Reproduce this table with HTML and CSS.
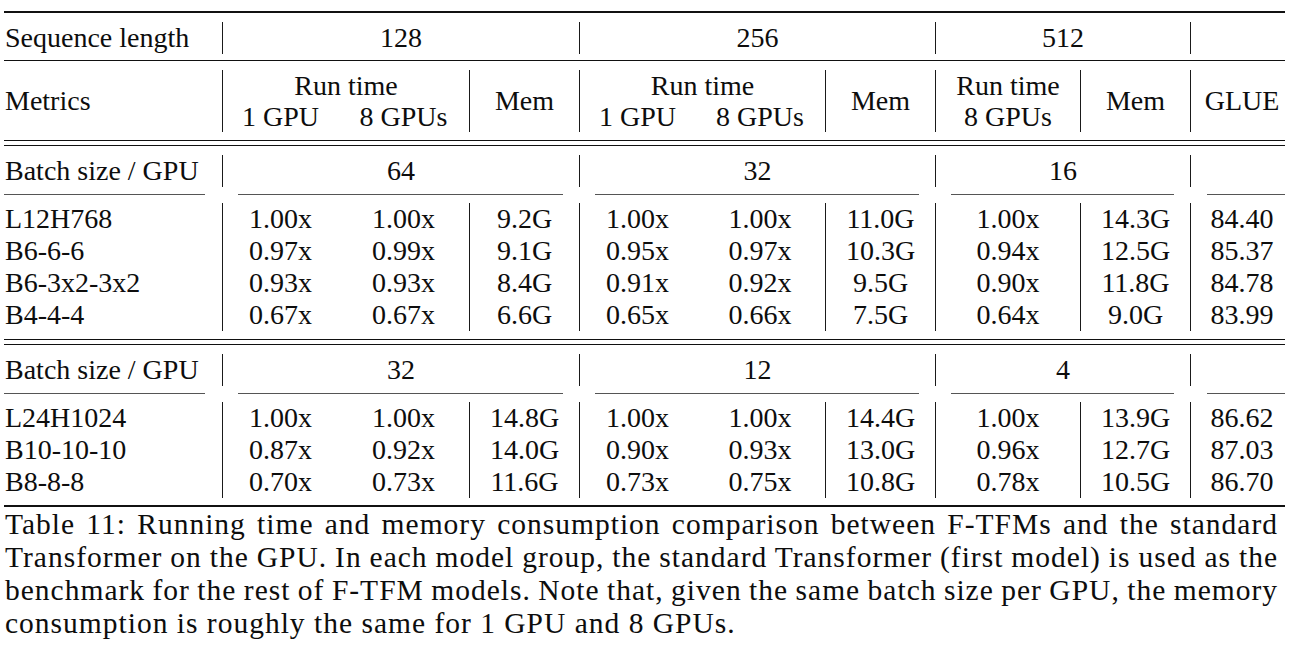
FILE: index.html
```html
<!DOCTYPE html>
<html lang="en">
<head>
<meta charset="utf-8">
<title>Table 11</title>
<link rel="stylesheet" href="styles.css">
</head>
<body>
<table class="results">
  <colgroup>
    <col class="c-label"><col class="c-g1"><col class="c-g8"><col class="c-mem">
    <col class="c-g1"><col class="c-g8b"><col class="c-mem">
    <col class="c-rt"><col class="c-mem"><col class="c-glue">
  </colgroup>
  <tbody>
    <tr class="rule thick"><td colspan="10"></td></tr>
    <tr class="gap g9"><td colspan="10"></td></tr>
    <tr class="row">
      <td class="label">Sequence length</td>
      <td class="bl" colspan="3">128</td>
      <td class="bl" colspan="3">256</td>
      <td class="bl" colspan="2">512</td>
      <td class="bl"></td>
    </tr>
    <tr class="gap g6"><td colspan="10"></td></tr>
    <tr class="rule thin"><td colspan="10"></td></tr>
    <tr class="gap g9"><td colspan="10"></td></tr>
    <tr class="row hdr">
      <td class="label" rowspan="2">Metrics</td>
      <td class="bl" colspan="2">Run time</td>
      <td class="bl" rowspan="2">Mem</td>
      <td class="bl" colspan="2">Run time</td>
      <td class="bl" rowspan="2">Mem</td>
      <td class="bl">Run time</td>
      <td class="bl" rowspan="2">Mem</td>
      <td class="bl glue" rowspan="2">GLUE</td>
    </tr>
    <tr class="row hdr">
      <td class="bl">1 GPU</td><td>8 GPUs</td>
      <td class="bl">1 GPU</td><td>8 GPUs</td>
      <td class="bl">8 GPUs</td>
    </tr>
    <tr class="gap g8"><td colspan="10"></td></tr>
    <tr class="rule double"><td colspan="10"></td></tr>
    <tr class="gap g9"><td colspan="10"></td></tr>
    <tr class="row">
      <td class="label">Batch size / GPU</td>
      <td class="bl" colspan="3">64</td>
      <td class="bl" colspan="3">32</td>
      <td class="bl" colspan="2">16</td>
      <td class="bl"></td>
    </tr>
    <tr class="gap g7"><td colspan="10"></td></tr>
    <tr class="cmid">
      <td><div class="cl r"></div></td>
      <td colspan="3"><div class="cl lr"></div></td>
      <td colspan="3"><div class="cl lr"></div></td>
      <td colspan="2"><div class="cl lr"></div></td>
      <td><div class="cl l"></div></td>
    </tr>
    <tr class="gap g8"><td colspan="10"></td></tr>
    <tr class="row"><td class="label">L12H768</td><td class="bl">1.00x</td><td>1.00x</td><td class="bl">9.2G</td><td class="bl">1.00x</td><td>1.00x</td><td class="bl">11.0G</td><td class="bl">1.00x</td><td class="bl">14.3G</td><td class="bl glue">84.40</td></tr>
    <tr class="row"><td class="label">B6-6-6</td><td class="bl">0.97x</td><td>0.99x</td><td class="bl">9.1G</td><td class="bl">0.95x</td><td>0.97x</td><td class="bl">10.3G</td><td class="bl">0.94x</td><td class="bl">12.5G</td><td class="bl glue">85.37</td></tr>
    <tr class="row"><td class="label">B6-3x2-3x2</td><td class="bl">0.93x</td><td>0.93x</td><td class="bl">8.4G</td><td class="bl">0.91x</td><td>0.92x</td><td class="bl">9.5G</td><td class="bl">0.90x</td><td class="bl">11.8G</td><td class="bl glue">84.78</td></tr>
    <tr class="row"><td class="label">B4-4-4</td><td class="bl">0.67x</td><td>0.67x</td><td class="bl">6.6G</td><td class="bl">0.65x</td><td>0.66x</td><td class="bl">7.5G</td><td class="bl">0.64x</td><td class="bl">9.0G</td><td class="bl glue">83.99</td></tr>
    <tr class="gap g8"><td colspan="10"></td></tr>
    <tr class="rule double"><td colspan="10"></td></tr>
    <tr class="gap g9"><td colspan="10"></td></tr>
    <tr class="row">
      <td class="label">Batch size / GPU</td>
      <td class="bl" colspan="3">32</td>
      <td class="bl" colspan="3">12</td>
      <td class="bl" colspan="2">4</td>
      <td class="bl"></td>
    </tr>
    <tr class="gap g7"><td colspan="10"></td></tr>
    <tr class="cmid">
      <td><div class="cl r"></div></td>
      <td colspan="3"><div class="cl lr"></div></td>
      <td colspan="3"><div class="cl lr"></div></td>
      <td colspan="2"><div class="cl lr"></div></td>
      <td><div class="cl l"></div></td>
    </tr>
    <tr class="gap g8"><td colspan="10"></td></tr>
    <tr class="row"><td class="label">L24H1024</td><td class="bl">1.00x</td><td>1.00x</td><td class="bl">14.8G</td><td class="bl">1.00x</td><td>1.00x</td><td class="bl">14.4G</td><td class="bl">1.00x</td><td class="bl">13.9G</td><td class="bl glue">86.62</td></tr>
    <tr class="row"><td class="label">B10-10-10</td><td class="bl">0.87x</td><td>0.92x</td><td class="bl">14.0G</td><td class="bl">0.90x</td><td>0.93x</td><td class="bl">13.0G</td><td class="bl">0.96x</td><td class="bl">12.7G</td><td class="bl glue">87.03</td></tr>
    <tr class="row"><td class="label">B8-8-8</td><td class="bl">0.70x</td><td>0.73x</td><td class="bl">11.6G</td><td class="bl">0.73x</td><td>0.75x</td><td class="bl">10.8G</td><td class="bl">0.78x</td><td class="bl">10.5G</td><td class="bl glue">86.70</td></tr>
    <tr class="gap g7"><td colspan="10"></td></tr>
    <tr class="rule thick"><td colspan="10"></td></tr>
  </tbody>
</table>
<div class="caption">
  <div class="cap-line">Table 11: Running time and memory consumption comparison between F-TFMs and the standard</div>
  <div class="cap-line tight">Transformer on the GPU. In each model group, the standard Transformer (first model) is used as the</div>
  <div class="cap-line tight">benchmark for the rest of F-TFM models. Note that, given the same batch size per GPU, the memory</div>
  <div class="cap-line last">consumption is roughly the same for 1 GPU and 8 GPUs.</div>
</div>
</body>
</html>
```

FILE: styles.css
```css
html, body {
  margin: 0;
  padding: 0;
  background: #ffffff;
}

body {
  font-family: "Liberation Serif", "Times New Roman", serif;
  font-size: 28px;
  color: #0d0d0d;
}

.results {
  margin: 11px 0 0 4px;
  width: 1281px;
  table-layout: fixed;
  border-collapse: separate;
  border-spacing: 0;
}

.c-label { width: 218px; }
.c-g1 { width: 116px; }
.c-g8 { width: 131px; }
.c-g8b { width: 130px; }
.c-mem { width: 110px; }
.c-rt { width: 145px; }
.c-glue { width: 95px; }

.results td {
  padding: 0;
  text-align: center;
  white-space: nowrap;
}

.row td {
  height: 32px;
  line-height: 32px;
}

.row.hdr td {
  height: 31px;
  line-height: 30px;
}

.row td.label {
  text-align: left;
  padding-left: 1px;
}

.row td.bl {
  border-left: 1px solid #1a1a1a;
}

.row td.glue {
  padding-left: 8px;
}

.gap td {
  padding: 0;
  font-size: 0;
  line-height: 0;
}

.g6 td { height: 6px; }
.g7 td { height: 7px; }
.g8 td { height: 8px; }
.g9 td { height: 9px; }

.rule td {
  height: 0;
  font-size: 0;
  line-height: 0;
}

.rule.thick td {
  border-top: 2px solid #111111;
}

.rule.thin td {
  border-top: 1px solid #111111;
}

.rule.double td {
  height: 4px;
  border-top: 1px solid #111111;
  border-bottom: 1px solid #111111;
}

.cmid td {
  height: 1px;
  font-size: 0;
  line-height: 0;
}

.cl {
  height: 1px;
  background: #555555;
}

.cl.r { margin-right: 17px; }
.cl.l { margin-left: 17px; }
.cl.lr { margin: 0 16px; }

.caption {
  margin: 1px 0 0 5px;
  width: 1273px;
  font-size: 29.5px;
  letter-spacing: 1px;
}

.cap-line {
  line-height: 33px;
  text-align: justify;
  text-align-last: justify;
}

.cap-line.tight {
  word-spacing: -3px;
}

.cap-line.last {
  text-align-last: left;
}
```
